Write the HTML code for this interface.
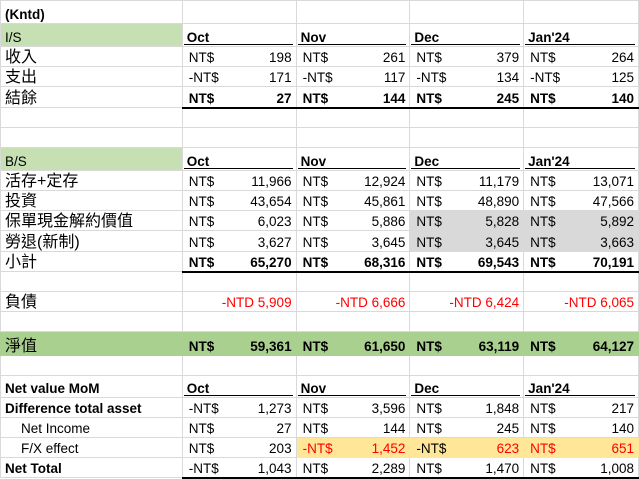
<!DOCTYPE html>
<html><head><meta charset="utf-8"><style>
body{margin:0;width:639px;height:479px;overflow:hidden;background:#fff;font-family:"Liberation Sans","Noto Sans CJK TC",sans-serif;font-size:13.5px;color:#000}
table{border-collapse:collapse;table-layout:fixed;position:absolute;left:0;top:0}
td{border:1px solid #d9d9d9;padding:0 4px;white-space:nowrap;overflow:hidden;line-height:15px;vertical-align:bottom;padding-bottom:1px}
td.a{font-size:16px;line-height:17px;padding-bottom:0}
.v{display:flex;justify-content:space-between}
.v span:first-child{padding-left:2px}
.b{font-weight:bold}
.h{font-weight:bold;position:relative}
.h:after{content:"";position:absolute;left:1px;right:3px;bottom:1px;border-bottom:1px solid #000}
.g1{background:#c6e0b4}
.g2{background:#a9d08e}
.gr{background:#d9d9d9}
.y{background:#ffe699}
.r{color:#f00;text-align:right}
.sum td.m{border-top:1px solid #000;border-bottom:2px solid #000}
.ind{padding-left:20px}
</style></head><body>
<table>
<colgroup><col style="width:182px"><col style="width:114px"><col style="width:114px"><col style="width:114px"><col style="width:115px"></colgroup>
<tr style="height:23px"><td class="b">(Kntd)</td><td></td><td></td><td></td><td></td></tr>
<tr style="height:23px"><td class="g1">I/S</td><td class="h">Oct</td><td class="h">Nov</td><td class="h">Dec</td><td class="h">Jan'24</td></tr>
<tr style="height:20px"><td class="a">收入</td><td><div class="v"><span>NT$</span><span>198</span></div></td><td><div class="v"><span>NT$</span><span>261</span></div></td><td><div class="v"><span>NT$</span><span>379</span></div></td><td><div class="v"><span>NT$</span><span>264</span></div></td></tr>
<tr style="height:20px"><td class="a">支出</td><td><div class="v"><span>-NT$</span><span>171</span></div></td><td><div class="v"><span>-NT$</span><span>117</span></div></td><td><div class="v"><span>-NT$</span><span>134</span></div></td><td><div class="v"><span>-NT$</span><span>125</span></div></td></tr>
<tr style="height:21px" class="sum b"><td class="a" style="font-weight:normal">結餘</td><td class="m"><div class="v"><span>NT$</span><span>27</span></div></td><td class="m"><div class="v"><span>NT$</span><span>144</span></div></td><td class="m"><div class="v"><span>NT$</span><span>245</span></div></td><td class="m"><div class="v"><span>NT$</span><span>140</span></div></td></tr>
<tr style="height:20px"><td></td><td></td><td></td><td></td><td></td></tr>
<tr style="height:20px"><td></td><td></td><td></td><td></td><td></td></tr>
<tr style="height:23px"><td class="g1">B/S</td><td class="h">Oct</td><td class="h">Nov</td><td class="h">Dec</td><td class="h">Jan'24</td></tr>
<tr style="height:20px"><td class="a">活存+定存</td><td><div class="v"><span>NT$</span><span>11,966</span></div></td><td><div class="v"><span>NT$</span><span>12,924</span></div></td><td><div class="v"><span>NT$</span><span>11,179</span></div></td><td><div class="v"><span>NT$</span><span>13,071</span></div></td></tr>
<tr style="height:20px"><td class="a">投資</td><td><div class="v"><span>NT$</span><span>43,654</span></div></td><td><div class="v"><span>NT$</span><span>45,861</span></div></td><td><div class="v"><span>NT$</span><span>48,890</span></div></td><td><div class="v"><span>NT$</span><span>47,566</span></div></td></tr>
<tr style="height:20px"><td class="a">保單現金解約價值</td><td><div class="v"><span>NT$</span><span>6,023</span></div></td><td><div class="v"><span>NT$</span><span>5,886</span></div></td><td class="gr"><div class="v"><span>NT$</span><span>5,828</span></div></td><td class="gr"><div class="v"><span>NT$</span><span>5,892</span></div></td></tr>
<tr style="height:21px"><td class="a">勞退(新制)</td><td><div class="v"><span>NT$</span><span>3,627</span></div></td><td><div class="v"><span>NT$</span><span>3,645</span></div></td><td class="gr"><div class="v"><span>NT$</span><span>3,645</span></div></td><td class="gr"><div class="v"><span>NT$</span><span>3,663</span></div></td></tr>
<tr style="height:20px" class="sum b"><td class="a" style="font-weight:normal">小計</td><td class="m"><div class="v"><span>NT$</span><span>65,270</span></div></td><td class="m"><div class="v"><span>NT$</span><span>68,316</span></div></td><td class="m"><div class="v"><span>NT$</span><span>69,543</span></div></td><td class="m"><div class="v"><span>NT$</span><span>70,191</span></div></td></tr>
<tr style="height:20px"><td></td><td></td><td></td><td></td><td></td></tr>
<tr style="height:20px"><td class="a">負債</td><td class="r">-NTD 5,909</td><td class="r">-NTD 6,666</td><td class="r">-NTD 6,424</td><td class="r">-NTD 6,065</td></tr>
<tr style="height:20px"><td></td><td></td><td></td><td></td><td></td></tr>
<tr style="height:24px" class="g2 b"><td class="a" style="font-weight:normal;border-color:#a9d08e">淨值</td><td style="border-color:#a9d08e"><div class="v"><span>NT$</span><span>59,361</span></div></td><td style="border-color:#a9d08e"><div class="v"><span>NT$</span><span>61,650</span></div></td><td style="border-color:#a9d08e"><div class="v"><span>NT$</span><span>63,119</span></div></td><td style="border-color:#a9d08e"><div class="v"><span>NT$</span><span>64,127</span></div></td></tr>
<tr style="height:20px"><td></td><td></td><td></td><td></td><td></td></tr>
<tr style="height:22px"><td class="b">Net value MoM</td><td class="h">Oct</td><td class="h">Nov</td><td class="h">Dec</td><td class="h">Jan'24</td></tr>
<tr style="height:20px"><td class="b">Difference total asset</td><td><div class="v"><span>-NT$</span><span>1,273</span></div></td><td><div class="v"><span>NT$</span><span>3,596</span></div></td><td><div class="v"><span>NT$</span><span>1,848</span></div></td><td><div class="v"><span>NT$</span><span>217</span></div></td></tr>
<tr style="height:20px"><td class="ind">Net Income</td><td><div class="v"><span>NT$</span><span>27</span></div></td><td><div class="v"><span>NT$</span><span>144</span></div></td><td><div class="v"><span>NT$</span><span>245</span></div></td><td><div class="v"><span>NT$</span><span>140</span></div></td></tr>
<tr style="height:20px"><td class="ind">F/X effect</td><td><div class="v"><span>NT$</span><span>203</span></div></td><td class="y" style="color:#f00;border-color:#ffe699"><div class="v"><span>-NT$</span><span>1,452</span></div></td><td class="y" style="border-color:#ffe699"><div class="v"><span>-NT$</span><span style="color:#f00">623</span></div></td><td class="y" style="color:#f00;border-color:#ffe699"><div class="v"><span>NT$</span><span>651</span></div></td></tr>
<tr style="height:20px" class="sum"><td class="b">Net Total</td><td class="m"><div class="v"><span>-NT$</span><span>1,043</span></div></td><td class="m"><div class="v"><span>NT$</span><span>2,289</span></div></td><td class="m"><div class="v"><span>NT$</span><span>1,470</span></div></td><td class="m"><div class="v"><span>NT$</span><span>1,008</span></div></td></tr>
</table>
</body></html>
